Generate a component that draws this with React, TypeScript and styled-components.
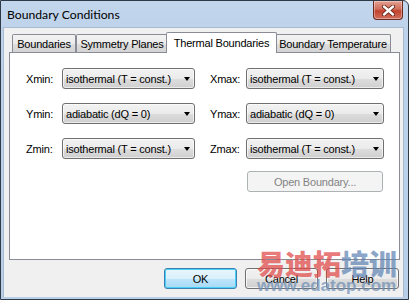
import React from "react";
import styled, { createGlobalStyle } from "styled-components";

const GlobalStyle = createGlobalStyle`
  html, body { margin: 0; padding: 0; background: #ffffff; }
  body { width: 409px; height: 300px; overflow: hidden; }
  * { box-sizing: border-box; }
`;

const UI_FONT = `"Liberation Sans", Arial, sans-serif`;

const Window = styled.div`
  position: relative;
  width: 409px;
  height: 300px;
  border: 1px solid #2e3a48;
  border-top-right-radius: 6px;
  background: linear-gradient(#c2d6ec, #bcd2ea 40px, #b9cfe7);
  padding: 0 4px 2px 2px;
  display: flex;
  flex-direction: column;
`;

const TitleBar = styled.div`
  height: 26px;
  display: flex;
  align-items: flex-start;
  justify-content: space-between;
  padding-left: 4px;
`;

const Title = styled.div`
  font-family: Lato, "Noto Sans", sans-serif;
  font-size: 12.2px;
  line-height: 16px;
  color: #000;
  margin-top: 6px;
`;

const CloseButton = styled.div`
  width: 30px;
  height: 19px;
  margin-right: 1px;
  border: 1px solid #6b2a22;
  border-top: none;
  border-radius: 0 0 4px 4px;
  background: linear-gradient(#e5a192, #cf6d5a 45%, #c2412c 55%, #d0705e);
  display: flex;
  align-items: center;
  justify-content: center;
  box-shadow: inset 0 0 0 1px rgba(255, 255, 255, 0.35);
`;

const Client = styled.div`
  flex: 1;
  background: #f0f0f0;
  border: 1px solid #a8bbd3;
  border-bottom: none;
  padding: 4px 3px 0 5px;
  display: flex;
  flex-direction: column;
  font-family: ${UI_FONT};
  font-size: 11px;
  letter-spacing: -0.2px;
  color: #000;
`;

const TabStrip = styled.div`
  height: 20px;
  display: flex;
  align-items: flex-end;
  padding-left: 3px;
  position: relative;
  z-index: 1;
`;

const Tab = styled.div<{ $w: number; $active?: boolean }>`
  width: ${(p) => p.$w}px;
  height: ${(p) => (p.$active ? 21 : 18)}px;
  margin: ${(p) => (p.$active ? "0 -2px -1px -2px" : "0")};
  border: 1px solid #898c95;
  border-bottom: none;
  border-radius: 2px 2px 0 0;
  background: ${(p) =>
    p.$active ? "#ffffff" : "linear-gradient(#f3f3f3, #ebebeb 50%, #dddddd 51%, #d4d4d4)"};
  display: flex;
  align-items: center;
  justify-content: center;
  padding-top: ${(p) => (p.$active ? 0 : 1)}px;
  position: relative;
  z-index: ${(p) => (p.$active ? 2 : 1)};
  white-space: nowrap;
`;

const Panel = styled.div`
  height: 208px;
  border: 1px solid #898c95;
  background: #ffffff;
  padding: 15px 0 0 16px;
`;

const FieldGrid = styled.div`
  display: grid;
  grid-template-columns: 169px 174px;
  column-gap: 15px;
  row-gap: 14px;
`;

const Field = styled.div`
  display: flex;
  align-items: center;
  height: 21px;
`;

const Label = styled.span`
  width: 36px;
  flex: none;
`;

const Combo = styled.div<{ $w: number }>`
  width: ${(p) => p.$w}px;
  height: 21px;
  border: 1px solid #707070;
  border-radius: 3px;
  background: linear-gradient(#f2f2f2, #ebebeb 50%, #dddddd 51%, #cfcfcf);
  box-shadow: inset 0 0 0 1px rgba(255, 255, 255, 0.6);
  display: flex;
  align-items: center;
  justify-content: space-between;
  padding: 0 4px 0 3px;
  white-space: nowrap;
`;

const Arrow = styled.span`
  width: 0;
  height: 0;
  border-left: 3.5px solid transparent;
  border-right: 3.5px solid transparent;
  border-top: 4px solid #000;
`;

const OpenCell = styled.div`
  grid-column: 2;
  padding-left: 37px;
  margin-top: -2px;
`;

const Button = styled.div<{ $w: number; $variant?: "default" | "normal" | "disabled" }>`
  width: ${(p) => p.$w}px;
  height: 21px;
  border-radius: 3px;
  display: flex;
  align-items: center;
  justify-content: center;
  white-space: nowrap;
  border: 1px solid
    ${(p) => (p.$variant === "default" ? "#3c7fb1" : p.$variant === "disabled" ? "#adb2b5" : "#707070")};
  color: ${(p) => (p.$variant === "disabled" ? "#838383" : "#000")};
  background: ${(p) =>
    p.$variant === "default"
      ? "linear-gradient(#eaf6fd, #d9f0fc 50%, #bee6fd 51%, #a7d9f5)"
      : p.$variant === "disabled"
      ? "#f4f4f4"
      : "linear-gradient(#f2f2f2, #ebebeb 50%, #dddddd 51%, #cfcfcf)"};
  box-shadow: ${(p) =>
    p.$variant === "default"
      ? "inset 0 0 0 1px #48d0f8"
      : p.$variant === "disabled"
      ? "none"
      : "inset 0 0 0 1px rgba(255,255,255,0.7)"};
`;

const ButtonRow = styled.div`
  display: flex;
  justify-content: flex-end;
  gap: 8px;
  margin-top: 8px;
  padding-right: 1px;
`;

const Watermark = styled.div`
  position: absolute;
  left: 256px;
  top: 247px;
  display: flex;
  flex-direction: column;
  align-items: flex-start;
  pointer-events: none;
  opacity: 0.72;
`;

const WmCn = styled.div`
  font-family: "Noto Sans CJK SC", sans-serif;
  font-weight: 900;
  font-size: 28px;
  line-height: 30px;
`;

const WmPart = styled.span<{ $c: string }>`
  color: ${(p) => p.$c};
`;

const WmUrl = styled.div`
  font-family: "Liberation Sans", Arial, sans-serif;
  font-weight: 700;
  font-size: 17px;
  line-height: 20px;
  color: #6f8fb5;
  margin-top: -2px;
`;

const rows = [
  { l: "Xmin:", lv: "isothermal (T = const.)", r: "Xmax:", rv: "isothermal (T = const.)" },
  { l: "Ymin:", lv: "adiabatic (dQ = 0)", r: "Ymax:", rv: "adiabatic (dQ = 0)" },
  { l: "Zmin:", lv: "isothermal (T = const.)", r: "Zmax:", rv: "isothermal (T = const.)" },
];

export default function App() {
  return (
    <>
      <GlobalStyle />
      <Window>
        <TitleBar>
          <Title>Boundary Conditions</Title>
          <CloseButton>
            <svg width="13" height="11" viewBox="0 0 13 11">
              <path
                d="M2 1.5 L11 9.5 M11 1.5 L2 9.5"
                stroke="#5a1c12"
                strokeWidth="4"
                strokeLinecap="round"
              />
              <path
                d="M2 1.5 L11 9.5 M11 1.5 L2 9.5"
                stroke="#ffffff"
                strokeWidth="2.4"
                strokeLinecap="round"
              />
            </svg>
          </CloseButton>
        </TitleBar>
        <Client>
          <TabStrip>
            <Tab $w={64}>Boundaries</Tab>
            <Tab $w={92}>Symmetry Planes</Tab>
            <Tab $w={111} $active>
              Thermal Boundaries
            </Tab>
            <Tab $w={116}>Boundary Temperature</Tab>
          </TabStrip>
          <Panel>
            <FieldGrid>
              {rows.map((r) => (
                <React.Fragment key={r.l}>
                  <Field>
                    <Label>{r.l}</Label>
                    <Combo $w={133}>
                      <span>{r.lv}</span>
                      <Arrow />
                    </Combo>
                  </Field>
                  <Field>
                    <Label>{r.r}</Label>
                    <Combo $w={138}>
                      <span>{r.rv}</span>
                      <Arrow />
                    </Combo>
                  </Field>
                </React.Fragment>
              ))}
              <OpenCell>
                <Button $w={136} $variant="disabled">
                  Open Boundary...
                </Button>
              </OpenCell>
            </FieldGrid>
          </Panel>
          <ButtonRow>
            <Button $w={73} $variant="default">
              OK
            </Button>
            <Button $w={73}>Cancel</Button>
            <Button $w={73}>Help</Button>
          </ButtonRow>
        </Client>
        <Watermark>
          <WmCn>
            <WmPart $c="#e04848">易迪拓</WmPart>
            <WmPart $c="#5f84b3">培训</WmPart>
          </WmCn>
          <WmUrl>www.edatop.com</WmUrl>
        </Watermark>
      </Window>
    </>
  );
}
